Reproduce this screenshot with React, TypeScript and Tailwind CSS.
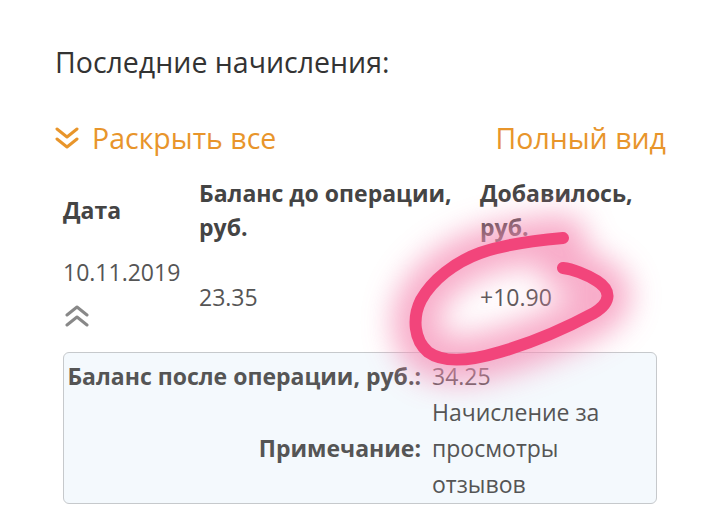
const font = { fontFamily: '"Open Sans", "Noto Sans", sans-serif' };

const stroke =
  "M563 238 C540 240 502 245 480 253 C455 262 432 280 421 300 C412 318 414 340 428 352 C443 363 470 361 500 352 C538 341 568 327 594 313 C612 302 611 290 597 281 C586 274 572 269 563 268";

// Двойная стрелка (вниз / вверх)
function DoubleChevron({ up, className }: { up?: boolean; className?: string }) {
  return (
    <svg width="24" height="24" viewBox="0 0 24 24" className={className}>
      <g
        fill="none"
        stroke="currentColor"
        strokeWidth="3"
        strokeLinecap="round"
        strokeLinejoin="round"
        transform={up ? "rotate(180 12 12)" : undefined}
      >
        <path d="M2 3 L12 11 L22 3" />
        <path d="M2 13 L12 21 L22 13" />
      </g>
    </svg>
  );
}

// Розовая обводка от руки поверх таблицы
function Scribble() {
  return (
    <svg
      className="pointer-events-none absolute left-0 top-0"
      width="720"
      height="530"
      viewBox="0 0 720 530"
    >
      <defs>
        <filter id="glow" x="-40%" y="-40%" width="180%" height="180%">
          <feGaussianBlur stdDeviation="15" />
        </filter>
      </defs>
      <path
        d={stroke}
        fill="none"
        stroke="#f58fb6"
        strokeWidth="46"
        strokeLinecap="round"
        opacity="0.75"
        filter="url(#glow)"
      />
      <path
        d={stroke}
        fill="none"
        stroke="#f2457b"
        strokeWidth="12"
        strokeLinecap="round"
        strokeLinejoin="round"
      />
    </svg>
  );
}

export default function App() {
  return (
    <div className="relative h-[530px] w-[720px] overflow-hidden bg-white" style={font}>
      <div className="pl-[55px] pr-[54px] pt-[44px]">
        <h2 className="text-[28.5px] leading-[36px] text-[#333]">Последние начисления:</h2>

        <div className="mt-[38px] flex items-center justify-between text-[28.5px] leading-[40px] text-[#e8952b]">
          <button className="flex items-center gap-[13px]">
            <DoubleChevron />
            <span>Раскрыть все</span>
          </button>
          <span>Полный вид</span>
        </div>

        {/* Таблица начислений */}
        <div className="mt-[18px] ml-[8px] grid grid-cols-[136px_281px_1fr] text-[23px] text-[#444]">
          <div className="flex items-center font-bold leading-[34px]">Дата</div>
          <div className="font-bold leading-[34px]">Баланс до операции, руб.</div>
          <div className="font-bold leading-[34px]">Добавилось, руб.</div>

          <div className="pt-[11px] text-[#555]">
            <div className="leading-[34px]">10.11.2019</div>
            <DoubleChevron up className="mt-[15px] ml-[2px] text-[#888]" />
          </div>
          <div className="pt-[36px] leading-[34px] text-[#555]">23.35</div>
          <div className="pt-[36px] leading-[34px] text-[#555]">+10.90</div>
        </div>

        <div className="mt-[24px] ml-[8px] w-[594px] rounded-[6px] border border-[#c6c9cc] bg-[#f4f9fd] pt-[5px] pb-[1px] text-[23px] leading-[36px] text-[#555]">
          <div className="grid grid-cols-[357px_1fr] gap-x-[11px]">
            <div className="whitespace-nowrap text-right font-bold">Баланс после операции, руб.:</div>
            <div>34.25</div>
            <div className="flex items-center justify-end font-bold">Примечание:</div>
            <div className="w-[190px]">Начисление за просмотры отзывов</div>
          </div>
        </div>
      </div>
      <Scribble />
    </div>
  );
}
